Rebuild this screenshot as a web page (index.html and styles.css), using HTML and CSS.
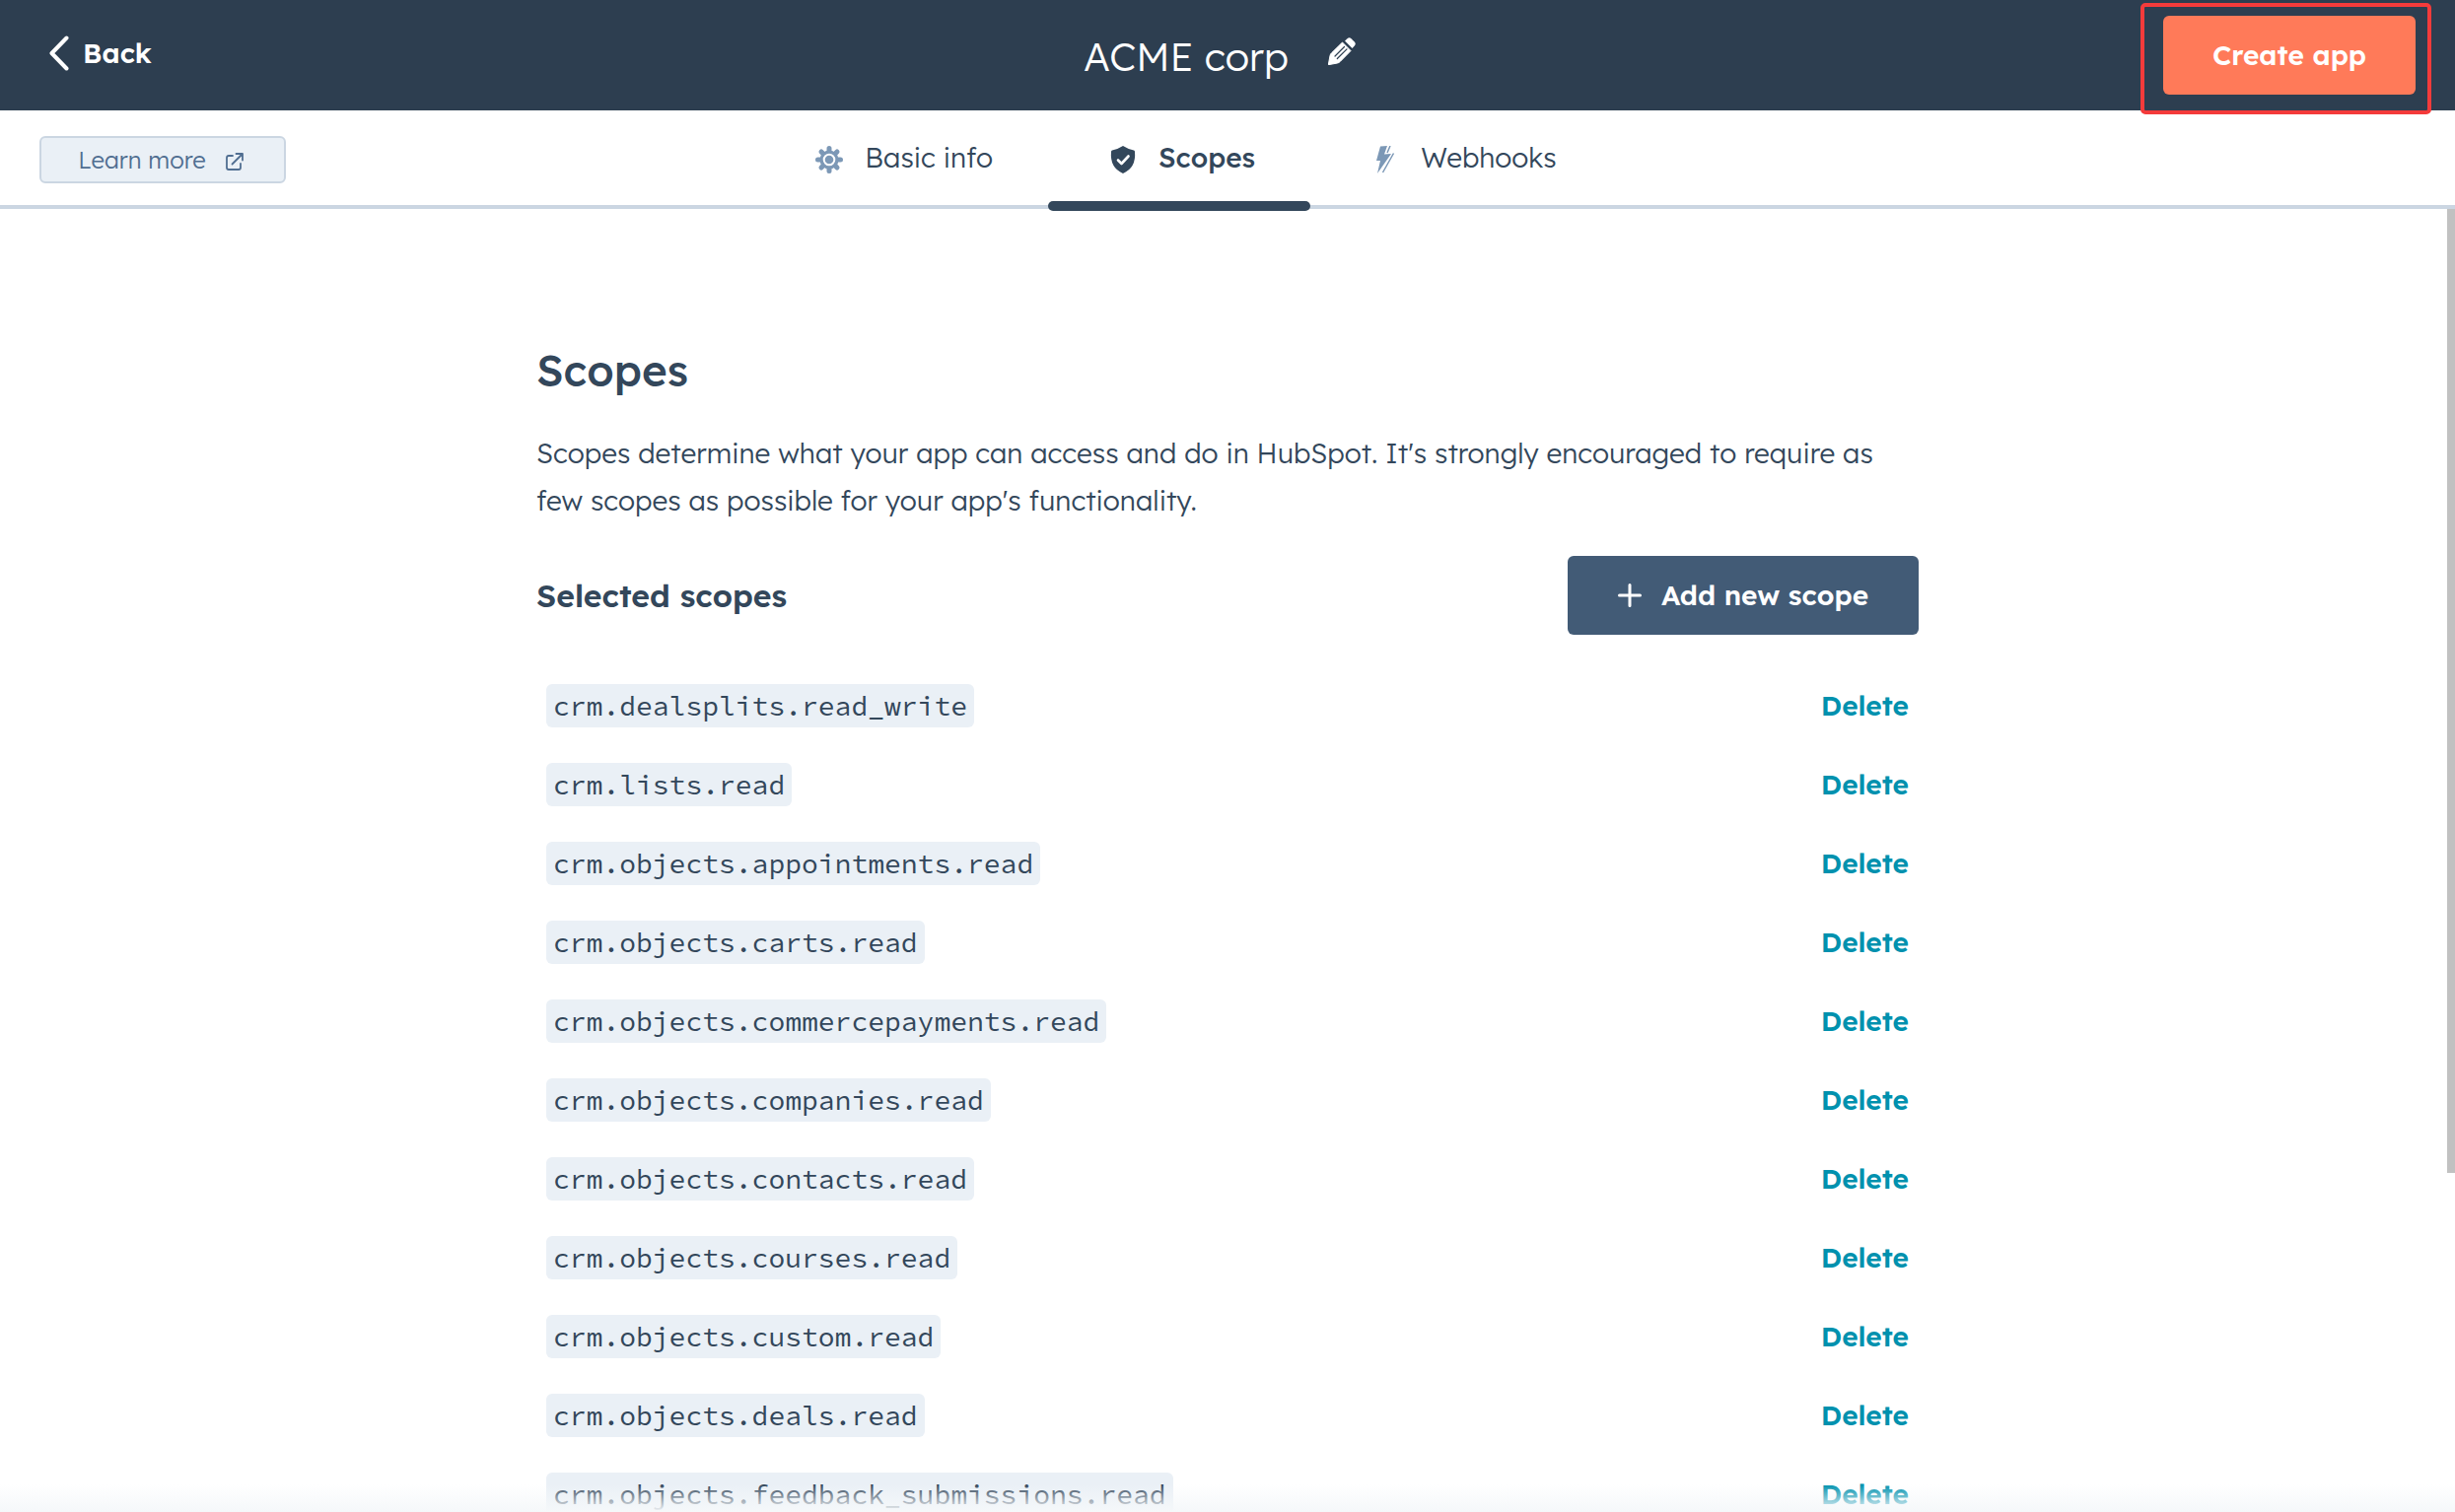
FILE: index.html
```html
<!DOCTYPE html>
<html lang="en">
<head>
<meta charset="utf-8">
<meta name="viewport" content="width=device-width, initial-scale=1">
<title>ACME corp - Scopes</title>
<link rel="stylesheet" href="styles.css">
</head>
<body>
<header class="topbar">
  <a class="back" href="#">
    <svg class="back-icon" viewBox="0 0 20 36" aria-hidden="true"><path d="M17.500 2.500 2.500 18l15 15.500" fill="none" stroke="currentColor" stroke-width="4" stroke-linecap="round" stroke-linejoin="round"/></svg>
    <span>Back</span>
  </a>
  <div class="app-name">
    <h1 class="app-title">ACME corp</h1>
    <button class="edit" type="button" aria-label="Edit app name">
      <svg class="edit-icon" viewBox="0 0 28 28" aria-hidden="true">
        <path d="M.300 27.700 2 18.500q.3-1.500 1.500-2.700L14.500 5l8.500 8.500L12.200 24.500q-1.200 1.200-2.700 1.500z" fill="currentColor" stroke="currentColor" stroke-linejoin="round"/>
        <path d="M17 3.500 19.500 1.200q2-1.800 4 0l3.300 3.300q1.800 2 0 4L24.500 11z" fill="currentColor"/>
        <path d="M7 19 16.500 9.500M9.300 21.500 19 11.800" stroke="#2d3e50" stroke-width="1.200" stroke-linecap="round" fill="none"/>
      </svg>
    </button>
  </div>
  <div class="create-wrap">
    <button class="create" type="button">Create app</button>
  </div>
</header>

<div class="subnav">
  <a class="learn" href="#">
    <span>Learn more</span>
    <svg class="learn-icon" viewBox="0 0 18 18" aria-hidden="true"><path d="M7 3H3Q1 3 1 5v10q0 2 2 2h10q2 0 2-2v-4M6.500 11.500 16.500 1.500M10.500 1H17v6.500" fill="none" stroke="currentColor" stroke-width="1.800" stroke-linecap="round" stroke-linejoin="round"/></svg>
  </a>
  <nav class="tabs" aria-label="App settings">
    <a class="tab" href="#">
      <svg class="tab-icon" viewBox="0 0 28 28" aria-hidden="true">
        <path d="M14 2.500v23M2.500 14h23M6 6l16 16M22 6 6 22" stroke="currentColor" stroke-width="5" stroke-linecap="round"/>
        <circle cx="14" cy="14" r="9.500" fill="currentColor"/>
        <circle cx="14" cy="14" r="5.300" fill="none" stroke="#fff" stroke-width="2"/>
      </svg>
      <span>Basic info</span>
    </a>
    <a class="tab tab-active" href="#" aria-current="page">
      <svg class="tab-icon" viewBox="0 0 28 28" aria-hidden="true">
        <path d="M14 0q5.500 3.500 11 4.500 1 .3 1 1.500Q27.500 22 14 28 .5 22 2 6q0-1.200 1-1.500Q8.500 3.500 14 0z" fill="currentColor"/>
        <path d="m9 14.500 3.500 3.500 7-7.500" fill="none" stroke="#fff" stroke-width="2.600" stroke-linecap="round" stroke-linejoin="round"/>
      </svg>
      <span>Scopes</span>
    </a>
    <a class="tab" href="#">
      <svg class="tab-icon" viewBox="0 0 28 28" aria-hidden="true">
        <path d="M9 .5 16 0 13 8.500 20 8 6 28 9 15H5z" fill="currentColor"/>
        <path d="M19 0 16 7M22.500 7.500 11.500 27" stroke="currentColor" stroke-width="1.500" fill="none"/>
      </svg>
      <span>Webhooks</span>
    </a>
  </nav>
</div>

<div class="viewport">
  <main class="content">
    <div class="column">
      <h2 class="heading">Scopes</h2>
      <p class="intro">Scopes determine what your app can access and do in HubSpot. It's strongly encouraged to require as few scopes as possible for your app's functionality.</p>
      <div class="list-head">
        <h3 class="list-title">Selected scopes</h3>
        <button class="add" type="button">
          <svg class="add-icon" viewBox="0 0 24 24" aria-hidden="true"><path d="M12 1.500v21M1.500 12h21" stroke="currentColor" stroke-width="3" stroke-linecap="round"/></svg>
          <span>Add new scope</span>
        </button>
      </div>
      <ul class="scopes">
        <li class="scope"><code class="code">crm.dealsplits.read_write</code><button class="delete" type="button">Delete</button></li>
        <li class="scope"><code class="code">crm.lists.read</code><button class="delete" type="button">Delete</button></li>
        <li class="scope"><code class="code">crm.objects.appointments.read</code><button class="delete" type="button">Delete</button></li>
        <li class="scope"><code class="code">crm.objects.carts.read</code><button class="delete" type="button">Delete</button></li>
        <li class="scope"><code class="code">crm.objects.commercepayments.read</code><button class="delete" type="button">Delete</button></li>
        <li class="scope"><code class="code">crm.objects.companies.read</code><button class="delete" type="button">Delete</button></li>
        <li class="scope"><code class="code">crm.objects.contacts.read</code><button class="delete" type="button">Delete</button></li>
        <li class="scope"><code class="code">crm.objects.courses.read</code><button class="delete" type="button">Delete</button></li>
        <li class="scope"><code class="code">crm.objects.custom.read</code><button class="delete" type="button">Delete</button></li>
        <li class="scope"><code class="code">crm.objects.deals.read</code><button class="delete" type="button">Delete</button></li>
        <li class="scope"><code class="code">crm.objects.feedback_submissions.read</code><button class="delete" type="button">Delete</button></li>
      </ul>
    </div>
  </main>
  <div class="fade"></div>
  <div class="scroll-thumb"></div>
</div>
</body>
</html>
```
FILE: styles.css
```css
* { box-sizing: border-box; }

body {
  margin: 0;
  height: 100vh;
  display: flex;
  flex-direction: column;
  overflow: hidden;
  background: #fff;
  color: #33475b;
  font-family: "Lexend Deca", Inter, sans-serif;
  font-size: 28px;
  font-weight: 300;
  line-height: 48px;
}

h1, h2, h3, p, ul { margin: 0; padding: 0; }
a { color: inherit; text-decoration: none; }
button { border: 0; padding: 0; background: none; color: inherit; font: inherit; cursor: pointer; }
svg { display: block; flex: none; }

/* Top bar */
.topbar {
  display: grid;
  grid-template-columns: 1fr auto 1fr;
  align-items: center;
  flex: none;
  height: 112px;
  padding: 0 40px;
  background: #2d3e50;
  color: #fff;
}
.back { display: flex; align-items: center; gap: 14px; justify-self: start; padding: 0 10px 4px; font-weight: 600; }
.back-icon { width: 20px; height: 36px; }
.app-name { display: flex; align-items: center; gap: 40px; padding-top: 2px; }
.app-title { font-size: 40px; font-weight: 300; }
.edit { padding: 0 16px 10px 0; }
.edit-icon { width: 28px; height: 28px; }
.create-wrap { position: relative; justify-self: end; }
.create-wrap::after {
  content: "";
  position: absolute;
  inset: -13px -16px -20px -23px;
  border: 4px solid #f43b3b;
  border-radius: 5px;
  pointer-events: none;
}
.create { display: block; width: 256px; height: 80px; border-radius: 6px; background: #ff7a59; font-weight: 600; }

/* Tabs */
.subnav {
  display: grid;
  grid-template-columns: 250px 1fr 340px;
  flex: none;
  height: 100px;
  padding: 0 40px;
  border-bottom: 4px solid #cbd6e2;
}
.learn {
  display: flex;
  align-items: center;
  justify-content: center;
  gap: 20px;
  align-self: center;
  height: 48px;
  margin-top: 4px;
  padding-right: 4px;
  border: 2px solid #cbd6e2;
  border-radius: 6px;
  background: #eaf0f6;
  color: #506e91;
  font-size: 24px;
}
.learn-icon { width: 18px; height: 18px; margin-top: 4px; }
.tabs { display: flex; justify-content: center; }
.tab { position: relative; display: flex; align-items: center; gap: 22px; padding: 0 56px 0 62px; }
.tab-icon { width: 28px; height: 28px; margin-top: 4px; color: #7c98b6; }
.tab-active { font-weight: 500; }
.tab-active .tab-icon { color: #33475b; }
.tab-active::after {
  content: "";
  position: absolute;
  inset: auto 0 -6px;
  height: 10px;
  border-radius: 5px;
  background: #33475b;
}

/* Page body */
.viewport { position: relative; flex: 1; min-height: 0; }
.content { height: 100%; overflow-y: auto; scrollbar-width: none; padding: 136px 40px 80px; }
.column { max-width: 1402px; margin: 0 auto; }
.heading { margin-bottom: 32px; font-size: 44px; font-weight: 500; line-height: 56px; }
.list-head { display: flex; align-items: center; justify-content: space-between; margin: 32px 0; }
.list-title { font-size: 32px; font-weight: 600; }
.add {
  display: flex;
  align-items: center;
  justify-content: center;
  gap: 20px;
  width: 356px;
  height: 80px;
  border-radius: 6px;
  background: #425b76;
  color: #fff;
  font-weight: 600;
}
.add-icon { width: 24px; height: 24px; }

.scopes { list-style: none; }
.scope { display: flex; align-items: center; justify-content: space-between; height: 80px; padding: 0 10px; }
.code {
  padding: 0 7px;
  border-radius: 6px;
  background: #eaf0f6;
  font-family: "Source Code Pro", "Liberation Mono", monospace;
  font-size: 28px;
  font-weight: 400;
  line-height: 44px;
}
.delete { color: #0091ae; font-weight: 600; }

.fade {
  position: absolute;
  inset: auto 0 0;
  height: 28px;
  background: linear-gradient(rgba(245, 248, 250, 0), #f5f8fa);
  pointer-events: none;
}
.scroll-thumb { position: absolute; top: 0; right: 0; width: 8px; height: 74%; background: #c1c1c1; }
```
